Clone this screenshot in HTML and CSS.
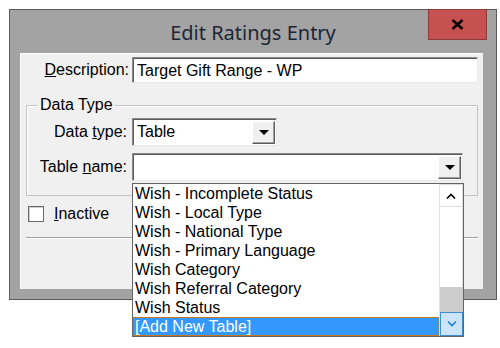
FILE: index.html
```html
<!DOCTYPE html>
<html>

<head>
    <link rel="stylesheet" href="styles.css">
</head>

<body>
    <div class="window">
        <div class="titlebar">
            <div class="title">Edit Ratings Entry</div>
            <div class="close">
                <svg width="13" height="11" viewBox="0 0 13 11">
                    <path d="M1.5 1 L11.5 10 M11.5 1 L1.5 10" stroke="#000" stroke-width="2.6" fill="none"/>
                </svg>
            </div>
        </div>

        <div class="client">
            <div class="row desc-row">
                <label class="lbl desc-lbl"><u>D</u>escription:</label>
                <div class="edit desc-edit">Target Gift Range - WP</div>
            </div>

            <fieldset class="group">
                <legend>Data Type</legend>
                <div class="row type-row">
                    <label class="lbl">Data <u>t</u>ype:</label>
                    <div class="combo combo-type">
                        <span class="combo-text">Table</span>
                        <span class="combo-btn"><span class="tri"></span></span>
                    </div>
                </div>
                <div class="row name-row">
                    <label class="lbl">Table <u>n</u>ame:</label>
                    <div class="combo combo-table">
                        <span class="combo-text"></span>
                        <span class="combo-btn"><span class="tri"></span></span>
                    </div>
                </div>
            </fieldset>

            <div class="check-row">
                <span class="checkbox"></span>
                <span class="check-lbl"><u>I</u>nactive</span>
            </div>

            <div class="separator"></div>
        </div>

        <!-- open list of the table name combo -->
        <div class="droplist">
            <div class="items">
                <div class="item">Wish - Incomplete Status</div>
                <div class="item">Wish - Local Type</div>
                <div class="item">Wish - National Type</div>
                <div class="item">Wish - Primary Language</div>
                <div class="item">Wish Category</div>
                <div class="item">Wish Referral Category</div>
                <div class="item">Wish Status</div>
                <div class="item selected">[Add New Table]</div>
            </div>
            <div class="vscroll">
                <div class="sb-up">
                    <svg width="10" height="6" viewBox="0 0 10 6">
                        <path d="M1 5.5 L5 1.5 L9 5.5" stroke="#000" stroke-width="1.6" fill="none"/>
                    </svg>
                </div>
                <div class="sb-track"></div>
                <div class="sb-thumb"></div>
                <div class="sb-down">
                    <svg width="10" height="6" viewBox="0 0 10 6">
                        <path d="M1 0.5 L5 4.5 L9 0.5" stroke="#1d7fcf" stroke-width="1.6" fill="none"/>
                    </svg>
                </div>
            </div>
        </div>
    </div>
</body>

</html>
```

FILE: styles.css
```css
html,
body {
    height: 100%;
}

body {
    margin: 0;
    padding-top: 9px;
    box-sizing: border-box;
    background-color: #fff;
    font-family: "Liberation Sans", Arial, sans-serif;
    font-size: 16px;
    color: #000;
}

.window {
    position: relative;
    margin-left: 9px;
    width: 488px;
    height: 291px;
    box-sizing: border-box;
    border: 1px solid #5c5c5c;
    background-color: #a3a3a3;
    display: flex;
    flex-direction: column;
}

.titlebar {
    height: 43px;
    display: grid;
    grid-template-columns: 1fr auto 1fr;
}

.title {
    grid-column: 2;
    font-family: "Noto Sans", sans-serif;
    font-size: 20px;
    line-height: 27px;
    padding-top: 9px;
    color: #1c2636;
}

.close {
    grid-column: 3;
    justify-self: end;
    width: 59px;
    height: 31px;
    margin-top: -1px;
    margin-right: 9px;
    box-sizing: border-box;
    border: 1px solid #8e3a3a;
    background-color: #c75050;
    display: flex;
    align-items: center;
    justify-content: center;
}

.client {
    margin: 0 13px 0 10px;
    height: 236px;
    box-sizing: border-box;
    background-color: #f0f0f0;
    border-top: 1px solid #fdfdfd;
    border-left: 1px solid #fdfdfd;
}

.row {
    display: flex;
    align-items: center;
}

.lbl {
    text-align: right;
    white-space: nowrap;
}

.desc-row {
    margin-top: 3px;
    height: 26px;
}

.desc-lbl {
    width: 108px;
    margin-right: 3px;
}

.edit {
    height: 26px;
    box-sizing: border-box;
    background-color: #fff;
    border-top: 1px solid #8c8c8c;
    border-left: 1px solid #8c8c8c;
    border-right: 1px solid #e8e8e8;
    border-bottom: 1px solid #e8e8e8;
    box-shadow: inset 1px 1px 0 #5a5a5a;
    padding: 3px 0 0 4px;
    line-height: 19px;
}

.desc-edit {
    width: 346px;
}

.group {
    margin: 13px 0 0 5px;
    width: 452px;
    box-sizing: border-box;
    padding: 0 0 14px 0;
    border: 1px solid #c4c4c4;
    box-shadow: inset 1px 1px 0 #fff;
    min-inline-size: 0;
}

.group legend {
    margin-left: 11px;
    padding: 0 2px;
    line-height: 18px;
}

.group .lbl {
    width: 100px;
    margin-right: 5px;
}

.type-row {
    margin-top: 4px;
}

.name-row {
    margin-top: 7px;
}

.combo {
    height: 28px;
    box-sizing: border-box;
    background-color: #fff;
    border-top: 1px solid #8c8c8c;
    border-left: 1px solid #8c8c8c;
    border-right: 1px solid #e8e8e8;
    border-bottom: 1px solid #e8e8e8;
    box-shadow: inset 1px 1px 0 #5a5a5a;
    display: flex;
    align-items: center;
    justify-content: space-between;
    padding: 0 1px 0 4px;
}

.combo-type {
    width: 145px;
}

.combo-table {
    width: 331px;
}

.combo-btn {
    width: 23px;
    height: 23px;
    box-sizing: border-box;
    background-color: #f0f0f0;
    border-top: 1px solid #fff;
    border-left: 1px solid #fff;
    border-right: 1px solid #5a5a5a;
    border-bottom: 1px solid #5a5a5a;
    box-shadow: inset -1px -1px 0 #a0a0a0;
    display: flex;
    align-items: center;
    justify-content: center;
}

.tri {
    width: 0;
    height: 0;
    border-left: 5px solid transparent;
    border-right: 5px solid transparent;
    border-top: 5px solid #000;
    margin-top: 1px;
}

/* popup list, hangs over the dialog below the table name combo */
.droplist {
    position: absolute;
    left: 122px;
    top: 173px;
    width: 332px;
    height: 154px;
    box-sizing: border-box;
    border: 1px solid #646464;
    background-color: #fff;
    display: flex;
    z-index: 2;
}

.items {
    flex: 1;
}

.item {
    height: 19px;
    line-height: 19px;
    padding-left: 2px;
    white-space: nowrap;
}

.item.selected {
    background-color: #3399ff;
    color: #fff;
    outline: 1px dotted #c8751a;
    outline-offset: -1px;
}

.vscroll {
    width: 24px;
    display: flex;
    flex-direction: column;
    background-color: #fff;
    border-left: 1px solid #e2e2e2;
    box-sizing: border-box;
}

.sb-up {
    height: 23px;
    box-sizing: border-box;
    border: 1px solid #dadada;
    border-left: none;
    display: flex;
    align-items: center;
    justify-content: center;
}

.sb-track {
    flex: 1;
    border-right: 1px solid #e2e2e2;
}

.sb-thumb {
    height: 25px;
    background-color: #cdcdcd;
}

.sb-down {
    height: 24px;
    box-sizing: border-box;
    background-color: #cce4f7;
    border: 1px solid #3c8fd6;
    display: flex;
    align-items: center;
    justify-content: center;
}

.check-row {
    margin: 10px 0 0 7px;
    display: flex;
    align-items: center;
    height: 16px;
}

.checkbox {
    width: 16px;
    height: 16px;
    box-sizing: border-box;
    background-color: #fff;
    border: 1px solid #6a6a6a;
    box-shadow: inset 1px 1px 0 #d0d0d0;
}

.check-lbl {
    margin-left: 10px;
}

.separator {
    margin: 15px 0 0 5px;
    width: 452px;
    height: 1px;
    background-color: #a0a0a0;
    border-bottom: 1px solid #fff;
}
```
